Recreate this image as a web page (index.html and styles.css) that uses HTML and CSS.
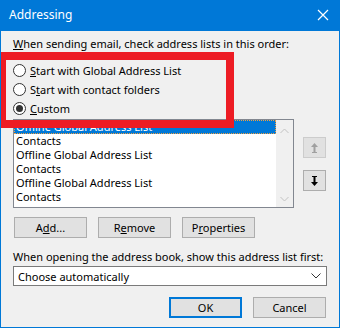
FILE: index.html
```html
<!DOCTYPE html>
<html lang="en">

<head>
    <meta charset="utf-8">
    <title>Addressing</title>
    <link rel="stylesheet" href="styles.css">
</head>

<body>
    <div class="window">
        <div class="titlebar">
            <span class="title">Addressing</span>
            <svg class="close" width="12" height="12" viewBox="0 0 12 12">
                <path d="M1 1 L11 11 M11 1 L1 11" stroke="#fff" stroke-width="1.2" fill="none" />
            </svg>
        </div>

        <div class="content">
            <p class="label"><u>W</u>hen sending email, check address lists in this order:</p>

            <div class="radios">
                <label class="radio"><span class="dot"></span><span><u>S</u>tart with Global Address List</span></label>
                <label class="radio"><span class="dot"></span><span>S<u>t</u>art with contact folders</span></label>
                <label class="radio"><span class="dot checked"></span><span><u>C</u>ustom</span></label>
            </div>

            <div class="listrow">
                <div class="listbox">
                    <ul class="items">
                        <li class="selected">Offline Global Address List</li>
                        <li>Contacts</li>
                        <li>Offline Global Address List</li>
                        <li>Contacts</li>
                        <li>Offline Global Address List</li>
                        <li>Contacts</li>
                    </ul>
                    <div class="scrollbar">
                        <svg width="9" height="6" viewBox="0 0 9 6"><path d="M0.5 5 L4.5 1 L8.5 5" stroke="#c2c2c2" fill="none" /></svg>
                        <svg width="9" height="6" viewBox="0 0 9 6"><path d="M0.5 1 L4.5 5 L8.5 1" stroke="#c2c2c2" fill="none" /></svg>
                    </div>
                </div>
                <div class="movers">
                    <button class="move">
                        <svg width="9" height="12" viewBox="0 0 9 12"><path d="M4.5 1 L1 5 H3.5 V10 H2 V11 H7 V10 H5.5 V5 H8 Z" fill="#a0a0a0" /></svg>
                    </button>
                    <button class="move">
                        <svg width="9" height="12" viewBox="0 0 9 12"><path d="M2 1 H7 V2 H5.5 V7 H8 L4.5 11 L1 7 H3.5 V2 H2 Z" fill="#000" /></svg>
                    </button>
                </div>
            </div>

            <div class="actions">
                <button class="btn">A<u>d</u>d...</button>
                <button class="btn">R<u>e</u>move</button>
                <button class="btn">P<u>r</u>operties</button>
            </div>

            <p class="label">When opening the address book, show this address list first:</p>
            <div class="combo">
                <span>Choose automatically</span>
                <svg width="10" height="6" viewBox="0 0 10 6"><path d="M0.5 0.5 L5 5 L9.5 0.5" stroke="#333" fill="none" /></svg>
            </div>

            <div class="footer">
                <button class="btn ok">OK</button>
                <button class="btn">Cancel</button>
            </div>
        </div>

        <!-- markering -->
        <div class="highlight"></div>
    </div>
</body>

</html>
```

FILE: styles.css
```css
* {
    margin: 0;
    padding: 0;
    box-sizing: border-box;
}

body {
    font-family: 'Noto Sans', sans-serif;
    font-size: 11px;
    color: #000;
    background: #f0f0f0;
}

u {
    text-decoration: underline;
    text-underline-offset: 1px;
}

.window {
    position: relative;
    width: 340px;
    height: 328px;
    border: 1px solid #0078d7;
    border-top: none;
    background: #f0f0f0;
    overflow: hidden;
}

/* Titel */
.titlebar {
    height: 31px;
    background: #0078d7;
    display: flex;
    align-items: center;
    justify-content: space-between;
    padding: 0 9px 2px 8px;
}

.title {
    color: #fff;
    font-size: 12px;
}

.close {
    margin-right: 1px;
}

.content {
    padding: 5px 12px 0 12px;
}

.label {
    line-height: 16px;
}

/* Radioknapper */
.radios {
    margin-top: 9px;
}

.radio {
    display: flex;
    align-items: center;
    height: 19px;
    gap: 4px;
}

.dot {
    width: 13px;
    height: 13px;
    border: 1px solid #333;
    border-radius: 50%;
    background: #fff;
    display: flex;
    align-items: center;
    justify-content: center;
}

.dot.checked::after {
    content: "";
    width: 7px;
    height: 7px;
    border-radius: 50%;
    background: #333;
}

/* Liste */
.listrow {
    display: flex;
    margin-top: 1px;
}

.listbox {
    width: 281px;
    height: 89px;
    border: 1px solid #828790;
    background: #fff;
    display: flex;
    overflow: hidden;
}

.items {
    list-style: none;
    flex: 1;
}

.items li {
    height: 14px;
    line-height: 14px;
    padding-left: 2px;
}

.items .selected {
    background: #0078d7;
    color: #fff;
    outline: 1px dotted #f0a040;
    outline-offset: -1px;
}

.scrollbar {
    width: 17px;
    background: #f0f0f0;
    display: flex;
    flex-direction: column;
    align-items: center;
    justify-content: space-between;
    padding: 8px 0 5px 0;
}

.movers {
    display: flex;
    flex-direction: column;
    gap: 12px;
    margin: 18px 0 0 9px;
}

.move {
    width: 23px;
    height: 21px;
    background: #e1e1e1;
    border: 1px solid #adadad;
    display: flex;
    align-items: center;
    justify-content: center;
}

.move:first-child {
    border-color: #cccccc;
}

/* Knapper */
button {
    font-family: inherit;
    font-size: 11px;
    color: #000;
}

.actions {
    display: flex;
    gap: 11px;
    margin: 9px 0 0 1px;
}

.btn {
    width: 73px;
    height: 21px;
    background: #e1e1e1;
    border: 1px solid #adadad;
}

.actions + .label {
    margin-top: 11px;
}

.combo {
    height: 20px;
    width: 314px;
    margin-top: 1px;
    background: #fff;
    border: 1px solid #7a7a7a;
    display: flex;
    align-items: center;
    justify-content: space-between;
    padding: 0 5px 0 4px;
}

.footer {
    display: flex;
    justify-content: flex-end;
    gap: 11px;
    margin-top: 11px;
    padding-right: 1px;
}

.btn.ok {
    border: 2px solid #0078d7;
}

/* Rød markering */
.highlight {
    position: absolute;
    left: -3px;
    top: 52px;
    width: 236px;
    height: 76px;
    border: 8px solid #ed1c24;
}
```
